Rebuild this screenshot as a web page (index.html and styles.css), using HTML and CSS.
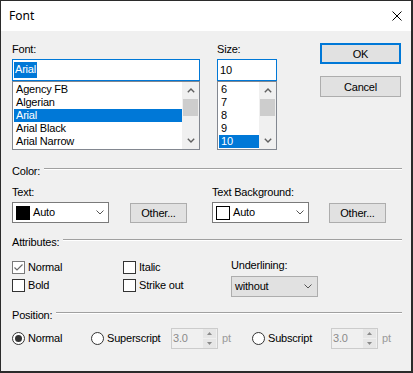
FILE: index.html
```html
<!DOCTYPE html>
<html lang="en">
<head>
    <meta charset="UTF-8">
    <title>Font</title>
    <link rel="stylesheet" href="styles.css">
</head>
<body>
    <div class="dialog">
        <div class="titlebar">
            <span class="title">Font</span>
            <svg class="close" width="10" height="10" viewBox="0 0 10 10">
                <path d="M0.5 0.5 L9.5 9.5 M9.5 0.5 L0.5 9.5" stroke="#000" stroke-width="1" fill="none"/>
            </svg>
        </div>

        <div class="content">
            <!-- font / size pickers and dialog buttons -->
            <div class="top">
                <div class="font-field">
                    <div class="label">Font:</div>
                    <div class="edit focus"><span class="selected-text">Arial</span></div>
                    <div class="listbox">
                        <div class="items">
                            <div class="item">Agency FB</div>
                            <div class="item">Algerian</div>
                            <div class="item sel">Arial</div>
                            <div class="item">Arial Black</div>
                            <div class="item">Arial Narrow</div>
                        </div>
                        <div class="vscroll">
                            <div class="sb-btn">
                                <svg width="8" height="5" viewBox="0 0 8 5"><path d="M0.8 4.3 L4 1.1 L7.2 4.3" stroke="#606060" stroke-width="1.4" fill="none"/></svg>
                            </div>
                            <div class="thumb"></div>
                            <div class="track"></div>
                            <div class="sb-btn">
                                <svg width="8" height="5" viewBox="0 0 8 5"><path d="M0.8 0.7 L4 3.9 L7.2 0.7" stroke="#606060" stroke-width="1.4" fill="none"/></svg>
                            </div>
                        </div>
                    </div>
                </div>

                <div class="size-field">
                    <div class="label">Size:</div>
                    <div class="edit focus size-edit">10</div>
                    <div class="listbox">
                        <div class="items">
                            <div class="item">6</div>
                            <div class="item">7</div>
                            <div class="item">8</div>
                            <div class="item">9</div>
                            <div class="item sel">10</div>
                        </div>
                        <div class="vscroll">
                            <div class="sb-btn">
                                <svg width="8" height="5" viewBox="0 0 8 5"><path d="M0.8 4.3 L4 1.1 L7.2 4.3" stroke="#606060" stroke-width="1.4" fill="none"/></svg>
                            </div>
                            <div class="thumb"></div>
                            <div class="track"></div>
                            <div class="sb-btn">
                                <svg width="8" height="5" viewBox="0 0 8 5"><path d="M0.8 0.7 L4 3.9 L7.2 0.7" stroke="#606060" stroke-width="1.4" fill="none"/></svg>
                            </div>
                        </div>
                    </div>
                </div>

                <div class="buttons">
                    <button class="btn default">OK</button>
                    <button class="btn">Cancel</button>
                </div>
            </div>

            <!-- color -->
            <div class="group-head"><span>Color:</span><div class="rule"></div></div>
            <div class="color-row">
                <div class="color-col">
                    <div class="label">Text:</div>
                    <div class="picker">
                        <div class="combo">
                            <span class="swatch black"></span>
                            <span class="combo-text">Auto</span>
                            <svg class="chev" width="8" height="5" viewBox="0 0 8 5"><path d="M0.5 0.5 L4 4 L7.5 0.5" stroke="#555" stroke-width="1" fill="none"/></svg>
                        </div>
                        <button class="btn other">Other...</button>
                    </div>
                </div>
                <div class="color-col second">
                    <div class="label">Text Background:</div>
                    <div class="picker">
                        <div class="combo">
                            <span class="swatch white"></span>
                            <span class="combo-text">Auto</span>
                            <svg class="chev" width="8" height="5" viewBox="0 0 8 5"><path d="M0.5 0.5 L4 4 L7.5 0.5" stroke="#555" stroke-width="1" fill="none"/></svg>
                        </div>
                        <button class="btn other">Other...</button>
                    </div>
                </div>
            </div>

            <!-- attributes -->
            <div class="group-head attr-head"><span>Attributes:</span><div class="rule"></div></div>
            <div class="attr-row">
                <div class="check-col">
                    <div class="check">
                        <span class="box checked">
                            <svg width="11" height="11" viewBox="0 0 11 11"><path d="M1.5 5.5 L4 8 L9.5 2.5" stroke="#6a6a6a" stroke-width="1.2" fill="none"/></svg>
                        </span>Normal
                    </div>
                    <div class="check"><span class="box"></span>Bold</div>
                </div>
                <div class="check-col second">
                    <div class="check"><span class="box"></span>Italic</div>
                    <div class="check"><span class="box"></span>Strike out</div>
                </div>
                <div class="underline-col">
                    <div class="label">Underlining:</div>
                    <div class="combo gray">
                        <span class="combo-text">without</span>
                        <svg class="chev" width="8" height="5" viewBox="0 0 8 5"><path d="M0.5 0.5 L4 4 L7.5 0.5" stroke="#555" stroke-width="1" fill="none"/></svg>
                    </div>
                </div>
            </div>

            <!-- position -->
            <div class="group-head pos-head"><span>Position:</span><div class="rule"></div></div>
            <div class="pos-row">
                <div class="radio-item normal"><span class="radio on"></span>Normal</div>
                <div class="radio-item super"><span class="radio"></span>Superscript</div>
                <div class="spin">
                    <span class="spin-value">3.0</span>
                    <div class="spin-btns">
                        <div class="spin-half"><svg width="5" height="3" viewBox="0 0 5 3"><path d="M0 3 L2.5 0 L5 3 Z" fill="#8a8a8a"/></svg></div>
                        <div class="spin-half"><svg width="5" height="3" viewBox="0 0 5 3"><path d="M0 0 L2.5 3 L5 0 Z" fill="#8a8a8a"/></svg></div>
                    </div>
                </div>
                <div class="unit">pt</div>
                <div class="radio-item sub"><span class="radio"></span>Subscript</div>
                <div class="spin">
                    <span class="spin-value">3.0</span>
                    <div class="spin-btns">
                        <div class="spin-half"><svg width="5" height="3" viewBox="0 0 5 3"><path d="M0 3 L2.5 0 L5 3 Z" fill="#8a8a8a"/></svg></div>
                        <div class="spin-half"><svg width="5" height="3" viewBox="0 0 5 3"><path d="M0 0 L2.5 3 L5 0 Z" fill="#8a8a8a"/></svg></div>
                    </div>
                </div>
                <div class="unit last">pt</div>
            </div>
        </div>
    </div>
</body>
</html>
```

FILE: styles.css
```css
* {
    margin: 0;
    padding: 0;
    box-sizing: border-box;
}

body {
    background: #fff;
    font-family: "Liberation Sans", Arial, sans-serif;
    font-size: 11px;
    line-height: 13px;
    letter-spacing: -0.2px;
    color: #000;
}

.dialog {
    width: 413px;
    height: 373px;
    background: #f0f0f0;
    border-style: solid;
    border-color: #2b2b2b;
    border-width: 1px 2px 2px 1px;
    overflow: hidden;
}

.titlebar {
    height: 30px;
    background: #fff;
    display: flex;
    align-items: center;
    justify-content: space-between;
    padding: 0 9px 0 8px;
}

.title {
    font-family: "Noto Sans", sans-serif;
    font-size: 12px;
    line-height: 16px;
    letter-spacing: 0;
}

.content {
    padding: 12px 9px 0 11px;
}

.label {
    height: 13px;
    white-space: nowrap;
}

/* top row */
.top {
    display: flex;
    align-items: flex-start;
}

.font-field {
    width: 188px;
}

.size-field {
    width: 60px;
    margin-left: 17px;
}

.buttons {
    width: 81px;
    margin-left: 43px;
    display: flex;
    flex-direction: column;
    gap: 12px;
}

.btn {
    height: 21px;
    border: 1px solid #adadad;
    background: #e1e1e1;
    font-family: inherit;
    font-size: 11px;
    letter-spacing: -0.2px;
    color: #000;
}

.btn.default {
    border: 2px solid #0078d7;
}

.edit {
    margin-top: 3px;
    height: 22px;
    background: #fff;
    border: 1px solid #7a7a7a;
    display: flex;
    align-items: center;
    padding-left: 1px;
}

.edit.focus {
    border-color: #0078d7;
}

.size-edit {
    padding-left: 2px;
}

.selected-text {
    background: #0078d7;
    color: #fff;
    padding: 1px 1px 2px;
}

.listbox {
    height: 69px;
    border: 1px solid #828790;
    background: #fff;
    display: flex;
}

.items {
    flex: 1;
    padding: 1px 0 1px 1px;
    overflow: hidden;
}

.item {
    height: 13px;
    padding-left: 2px;
    white-space: nowrap;
}

.item.sel {
    background: #0078d7;
    color: #fff;
}

.vscroll {
    width: 17px;
    background: #f0f0f0;
    display: flex;
    flex-direction: column;
}

.sb-btn {
    height: 17px;
    display: flex;
    align-items: center;
    justify-content: center;
}

.thumb {
    height: 17px;
    margin: 0 1px;
    background: #cdcdcd;
}

.track {
    flex: 1;
}

/* group headings with etched rule */
.group-head {
    display: flex;
    height: 13px;
    margin-top: 15px;
}

.rule {
    flex: 1;
    height: 2px;
    margin: 3px 0 0 4px;
    border-top: 1px solid #a0a0a0;
    border-bottom: 1px solid #fff;
}

/* color */
.color-row {
    display: flex;
    margin-top: 8px;
}

.color-col {
    width: 200px;
}

.color-col.second {
    width: auto;
}

.picker {
    display: flex;
    align-items: flex-start;
    margin-top: 3px;
}

.combo {
    width: 97px;
    height: 21px;
    background: #fff;
    border: 1px solid #7a7a7a;
    display: flex;
    align-items: center;
    padding: 0 4px 0 3px;
}

.combo .chev {
    margin-left: auto;
}

.swatch {
    width: 14px;
    height: 14px;
    margin-right: 3px;
}

.swatch.black {
    background: #000;
}

.swatch.white {
    background: #fff;
    border: 1px solid #000;
}

.btn.other {
    width: 57px;
    height: 20px;
    margin: 1px 0 0 21px;
}

.color-col.second .btn.other {
    margin-left: 20px;
}

/* attributes */
.attr-head {
    margin-top: 13px;
}

.attr-row {
    display: flex;
    margin-top: 10px;
}

.check-col {
    width: 111px;
    padding-top: 2px;
    display: flex;
    flex-direction: column;
    gap: 5px;
}

.check-col.second {
    width: 108px;
}

.check {
    display: flex;
    align-items: center;
    height: 13px;
    white-space: nowrap;
}

.box {
    width: 13px;
    height: 13px;
    border: 1px solid #333;
    background: #fff;
    margin-right: 3px;
    display: flex;
}

.box.checked {
    border-color: #7a7a7a;
}

.combo.gray {
    width: 87px;
    margin-top: 4px;
    background: #e1e1e1;
    border-color: #adadad;
    padding: 0 5px 0 3px;
}

/* position */
.pos-head {
    margin-top: 12px;
}

.pos-row {
    display: flex;
    align-items: center;
    height: 21px;
    margin-top: 6px;
}

.pos-row > * {
    flex-shrink: 0;
}

.radio-item {
    display: flex;
    align-items: center;
    white-space: nowrap;
}

.radio-item.normal {
    width: 79px;
}

.radio-item.super {
    width: 80px;
}

.radio-item.sub {
    width: 79px;
}

.radio {
    width: 13px;
    height: 13px;
    border: 1px solid #333;
    border-radius: 50%;
    background: #fff;
    margin-right: 3px;
    display: flex;
    align-items: center;
    justify-content: center;
}

.radio.on::after {
    content: "";
    width: 7px;
    height: 7px;
    border-radius: 50%;
    background: #333;
}

.spin {
    width: 47px;
    height: 21px;
    border: 1px solid #ccc;
    background: #f0f0f0;
    display: flex;
    align-items: center;
    padding-left: 1px;
}

.spin-value {
    color: #8a8a8a;
}

.spin-btns {
    margin-left: auto;
    margin-right: 1px;
    width: 13px;
    height: 19px;
    display: flex;
    flex-direction: column;
    gap: 1px;
}

.spin-half {
    flex: 1;
    background: #e6e6e6;
    display: flex;
    align-items: center;
    justify-content: center;
}

.unit {
    width: 34px;
    padding-left: 4px;
    color: #9a9a9a;
}

.unit.last {
    width: auto;
}
```
